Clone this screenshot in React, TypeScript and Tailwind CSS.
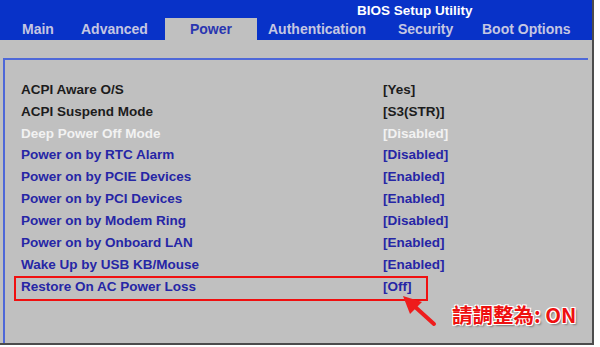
type Tab = { name: string; box: string }

const tabs: Tab[] = [
  { name: 'Main', box: 'w-[59px] text-[#c4c6e2]' },
  { name: 'Advanced', box: 'w-[84px] text-[#c4c6e2]' },
  { name: 'Power', box: 'w-[92px] justify-center bg-[#c0c0c0] text-[#2a36b0]' },
  { name: 'Authentication', box: 'w-[130px] ml-[11px] text-[#c4c6e2]' },
  { name: 'Security', box: 'w-[84px] text-[#c4c6e2]' },
  { name: 'Boot Options', box: 'w-[100px] text-[#c4c6e2]' },
]

type Row = { label: string; value: string; tone: 'black' | 'white' | 'blue' }

const rows: Row[] = [
  { label: 'ACPI Aware O/S', value: '[Yes]', tone: 'black' },
  { label: 'ACPI Suspend Mode', value: '[S3(STR)]', tone: 'black' },
  { label: 'Deep Power Off Mode', value: '[Disabled]', tone: 'white' },
  { label: 'Power on by RTC Alarm', value: '[Disabled]', tone: 'blue' },
  { label: 'Power on by PCIE Devices', value: '[Enabled]', tone: 'blue' },
  { label: 'Power on by PCI Devices', value: '[Enabled]', tone: 'blue' },
  { label: 'Power on by Modem Ring', value: '[Disabled]', tone: 'blue' },
  { label: 'Power on by Onboard LAN', value: '[Enabled]', tone: 'blue' },
  { label: 'Wake Up by USB KB/Mouse', value: '[Enabled]', tone: 'blue' },
  { label: 'Restore On AC Power Loss', value: '[Off]', tone: 'blue' },
]

const toneClass = {
  black: 'text-[#1c1c1c]',
  white: 'text-[#f2f2f2]',
  blue: 'text-[#2626a6]',
}

export default function App() {
  return (
    <div className="w-[600px] h-[347px] bg-white overflow-hidden font-['Liberation_Sans',Arial,sans-serif]">
      {/* 画面本体 */}
      <div className="relative w-[594px] h-[345px] bg-[#c0c0c0] border-r-2 border-b-2 border-[#4c4c4c] flex flex-col">
        {/* ヘッダー */}
        <div className="h-[40px] bg-[#0832c8] flex flex-col">
          <div className="h-[18px] pl-[357px] pt-[3px] text-white font-bold text-[13.5px] leading-[15px] whitespace-nowrap">
            BIOS Setup Utility
          </div>
          <div className="flex h-[22px] pl-[22px] items-stretch whitespace-nowrap">
            {tabs.map((t) => (
              <div key={t.name} className={`flex items-center font-bold text-[14px] ${t.box}`}>
                {t.name}
              </div>
            ))}
          </div>
        </div>

        {/* 設定パネル */}
        <div className="mt-[18px] ml-[3px] mr-[4px] flex-1 border-t-2 border-l-2 border-[#4e68d8] pl-[16px] pt-[19px]">
          {rows.map((r) => (
            <div key={r.label} className={`flex h-[21.9px] items-center font-bold text-[13.5px] whitespace-nowrap ${toneClass[r.tone]}`}>
              <div className="w-[362px]">{r.label}</div>
              <div>{r.value}</div>
            </div>
          ))}
        </div>

        {/* 注釈 */}
        <div className="absolute left-[14px] top-[276px] w-[414px] h-[25px] border-2 border-[#f01010]" />
        <svg className="absolute left-0 top-0" width="594" height="345" viewBox="0 0 594 345">
          <line x1="434" y1="324" x2="413" y2="305" stroke="#ee1c1c" strokeWidth="4" strokeLinecap="round" />
          <polygon points="403,296 422,302 410,314" fill="#ee1c1c" />
        </svg>
        <div className="absolute left-[452px] top-[302px] text-[20.5px] leading-[24px] font-bold text-[#ee1010] whitespace-nowrap font-['Noto_Sans_CJK_TC','Liberation_Sans',sans-serif] [text-shadow:1px_1px_0_#fff,-1px_-1px_0_#fff,1px_-1px_0_#fff,-1px_1px_0_#fff,2px_2px_2px_rgba(0,0,0,0.35)]">
          請調整為: ON
        </div>
      </div>
    </div>
  )
}
